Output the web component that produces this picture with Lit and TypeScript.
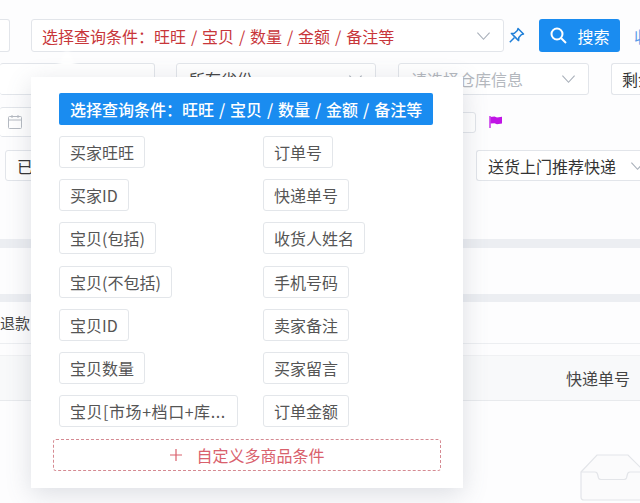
import { LitElement, html, css, svg } from "lit";
import { customElement } from "lit/decorators.js";

const chevron = svg`<svg class="chev" width="15" height="10" viewBox="0 0 16 10" fill="none" stroke="#a9b0ba" stroke-width="1.2"><path d="M1.5 1.5 8 8.5 14.5 1.5"/></svg>`;

const leftChips = ["买家旺旺", "买家ID", "宝贝(包括)", "宝贝(不包括)", "宝贝ID", "宝贝数量"];
const rightChips = ["订单号", "快递单号", "收货人姓名", "手机号码", "卖家备注", "买家留言", "订单金额"];

@customElement("app-root")
export class AppRoot extends LitElement {
  static styles = css`
    :host {
      display: block;
      position: relative;
      width: 640px;
      height: 503px;
      overflow: hidden;
      background: #fff;
      font-family: "Noto Sans CJK SC", "Liberation Sans", sans-serif;
      font-size: 16px;
      color: #444;
    }
    .page { display: flex; flex-direction: column; height: 503px; box-sizing: border-box; padding-top: 19px; background: #fdfdfe; }
    .row { display: flex; align-items: center; flex: none; }
    .box {
      box-sizing: border-box;
      display: flex;
      align-items: center;
      justify-content: space-between;
      flex: none;
      height: 33px;
      border: 1px solid #e2e5ea;
      border-radius: 3px;
      background: #fff;
      white-space: nowrap;
      overflow: hidden;
    }
    .r1 { height: 33px; }
    .cut-l { width: 10px; border-left: none; border-radius: 0 3px 3px 0; margin-right: 21px; }
    .query { width: 473px; padding: 0 12px 0 10px; color: #c8363a; word-spacing: 1.3px; }
    .pin { margin: 0 13px 0 3px; width: 19px; height: 19px; flex: none; }
    .btn {
      box-sizing: border-box; width: 81px; height: 33px; flex: none; border-radius: 3px; background: #1a8cf0;
      color: #fff; display: flex; align-items: center; justify-content: center; gap: 9px;
    }
    .more { margin-left: 14px; color: #5a9be8; white-space: nowrap; }
    .r2 { height: 32px; margin-top: 11px; }
    .w1 { width: 155px; height: 32px; margin-right: 21px; border-left: none; }
    .w2 { width: 200px; height: 32px; margin-right: 22px; padding: 0 12px; color: #444; }
    .w3 { width: 191px; height: 32px; margin-right: 22px; padding: 0 12px; color: #b4b8be; }
    .w4 { width: 40px; height: 32px; padding-left: 10px; color: #333; border-right: none; }
    .r3 { height: 30px; margin-top: 12px; }
    .date { width: 150px; height: 30px; padding-left: 7px; margin-right: 250px; border-left: none; }
    .date2 { width: 76px; height: 21px; margin-right: 13px; }
    .r4 { height: 31px; margin-top: 13px; padding-left: 5px; justify-content: space-between; }
    .status { width: 120px; height: 31px; padding-left: 11px; color: #333; }
    .express { width: 164px; height: 31px; padding: 0 0 0 11px; gap: 14px; justify-content: flex-start; color: #333; border-right: none; border-radius: 3px 0 0 3px; }
    .express .chev { flex: none; }
    .band { flex: none; background: #eceef2; }
    .b1 { height: 9px; margin-top: 58px; }
    .b2 { height: 8px; margin-top: 46px; }
    .refund { height: 42px; flex: none; display: flex; align-items: center; font-size: 15px; border-bottom: 1px solid #eceef1; box-sizing: border-box; color: #444; }
    .thead {
      height: 46px; margin-top: 11px; flex: none; box-sizing: border-box;
      display: flex; align-items: center; justify-content: flex-end; padding-right: 10px;
      background: #f8f9fa; border-top: 1px solid #f0f1f3; border-bottom: 1px solid #e8eaed;
      color: #444;
    }
    .empty { flex: 1; display: flex; justify-content: flex-end; padding-top: 53px; box-sizing: border-box; }

    .caret {
      position: absolute; left: 51px; top: 49px; width: 0; height: 0;
      border-left: 16px solid transparent; border-right: 16px solid transparent; border-bottom: 29px solid #fff;
      filter: blur(2px);
    }
    .pop {
      position: absolute; left: 31px; top: 77px; width: 432px; height: 411px; box-sizing: border-box;
      background: #fff; box-shadow: 0 6px 24px rgba(90,100,120,.2);
      padding: 16px 22px 0;
      display: flex; flex-direction: column;
    }
    .title {
      box-sizing: border-box; margin: 0 6px; width: 374px; height: 32px; background: #1a8cf0; color: #fff; border-radius: 2px;
      font-weight: 500; display: flex; align-items: center; padding-left: 11px; white-space: pre; word-spacing: 1.3px;
    }
    .grid { display: grid; grid-template-columns: 204px auto; margin: 11px 6px 0; justify-items: start; }
    .col { display: flex; flex-direction: column; align-items: flex-start; gap: 11.2px; }
    .chip {
      box-sizing: border-box; height: 32px; padding: 0 10px; border: 1px solid #e3e6ea; border-radius: 3px;
      display: flex; align-items: center; color: #555; white-space: nowrap; background: #fff;
    }
    .long { width: 179px; letter-spacing: 0.55px; }
    .custom {
      box-sizing: border-box; height: 32px; margin-top: 12px; border: 1px dashed #d58a92; border-radius: 3px;
      display: flex; align-items: center; justify-content: center; gap: 13px; color: #d9606c;
    }
  `;

  render() {
    return html`
      <div class="page">
        <div class="row r1">
          <div class="box cut-l"></div>
          <div class="box query"><span>选择查询条件：旺旺 / 宝贝 / 数量 / 金额 / 备注等</span>${chevron}</div>
          <svg class="pin" viewBox="0 0 19 19" fill="none" stroke="#1f7fd8" stroke-width="1.5" stroke-linejoin="round">
            <path d="M11 2.5 16.5 8 14.5 8.6 11.8 11.6 11.6 14.6 4.4 7.4 7.4 7.2 10.4 4.5Z"/><path d="M7.5 11.5 2.8 16.2"/>
          </svg>
          <div class="btn">
            <svg width="19" height="19" viewBox="0 0 19 19" fill="none" stroke="#fff" stroke-width="2"><circle cx="8" cy="8" r="5.5"/><path d="M12 12 17 17"/></svg>
            <span>搜索</span>
          </div>
          <span class="more">收起</span>
        </div>
        <div class="row r2">
          <div class="box w1"></div>
          <div class="box w2"><span>所有省份</span>${chevron}</div>
          <div class="box w3"><span>请选择仓库信息</span>${chevron}</div>
          <div class="box w4">剩余</div>
        </div>
        <div class="row r3">
          <div class="box date">
            <svg width="16" height="16" viewBox="0 0 16 16" fill="none" stroke="#b5bac2" stroke-width="1"><rect x="1.5" y="2.5" width="13" height="12" rx="1"/><path d="M1.5 6h13M5 1v3M11 1v3"/></svg>
          </div>
          <div class="box date2"></div>
          <svg width="14" height="12" viewBox="0 0 14 12"><path d="M1 0v12" stroke="#c014e6" stroke-width="1.3"/><path d="M1.5 1 5.5 .6 8 1.6 13 .8V7.6L8 8.2 5.5 7.2 1.5 7.6Z" fill="#c014e6"/></svg>
        </div>
        <div class="row r4">
          <div class="box status">已</div>
          <div class="box express"><span>送货上门推荐快递</span>${chevron}</div>
        </div>
        <div class="band b1"></div>
        <div class="band b2"></div>
        <div class="refund">退款</div>
        <div class="thead">快递单号</div>
        <div class="empty">
          <svg width="60" height="47" viewBox="0 0 60 47" fill="#fbfbfc" stroke="#e3e5e9" stroke-width="1.2">
            <path d="M1 18 17 1H48L65 18V46H4Q1 46 1 43Z"/>
            <path d="M1 18H15Q17 18 17.5 20L18.5 24Q19 25.5 21 25.5H44Q46 25.5 46.5 24L47.5 20Q48 18 50 18H65" fill="none"/>
          </svg>
        </div>
      </div>

      <div class="caret"></div>
      <div class="pop">
        <div class="title">选择查询条件：旺旺 / 宝贝 / 数量 / 金额 / 备注等</div>
        <div class="grid">
          <div class="col">
            ${leftChips.map((c) => html`<div class="chip">${c}</div>`)}
            <div class="chip long">宝贝[市场+档口+库...</div>
          </div>
          <div class="col">${rightChips.map((c) => html`<div class="chip">${c}</div>`)}</div>
        </div>
        <div class="custom">
          <svg width="14" height="14" viewBox="0 0 14 14" stroke="#d9606c" stroke-width="1.2"><path d="M7 1v12M1 7h12"/></svg>
          <span>自定义多商品条件</span>
        </div>
      </div>
    `;
  }
}
